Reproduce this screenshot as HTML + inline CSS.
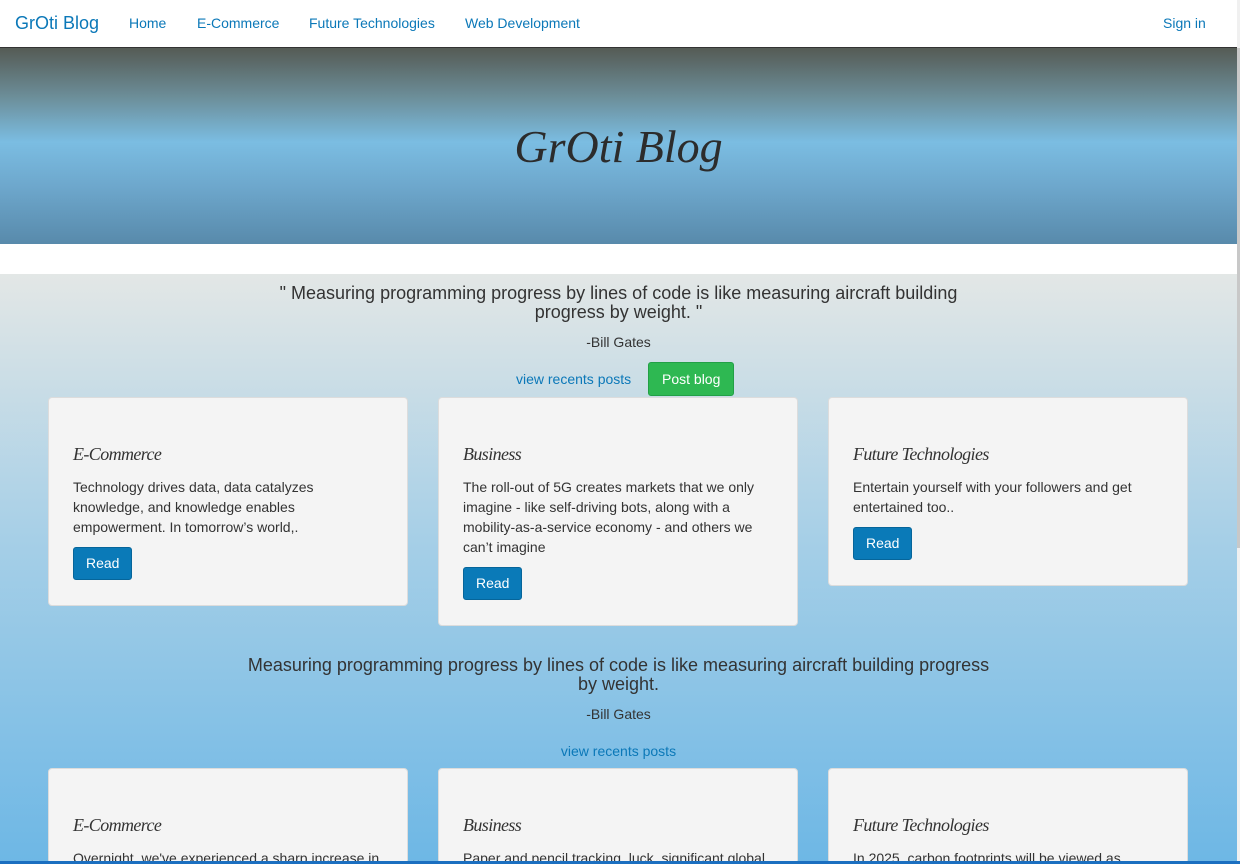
<!DOCTYPE html>
<html><head><meta charset="utf-8"><style>
*{box-sizing:border-box}
html,body{overflow:hidden}
body{margin:0;width:1240px;height:864px;font-family:"Liberation Sans",sans-serif;background:#fff;position:relative}
.nav{position:absolute;left:0;top:0;width:1237px;height:48px;background:#fff;border-bottom:1px solid #333}
.nav a{position:absolute;top:15px;color:#0b78b8;font-size:14px;text-decoration:none}
.brand{font-size:18px!important;top:13px!important}
.hero{position:absolute;top:48px;left:0;width:1237px;height:196px;background:linear-gradient(#555b55 0%,#6c8e99 25%,#7bbde2 48%,#6ea8cd 70%,#588aab 100%)}
.hero h1{margin:0;position:absolute;top:72px;width:100%;text-align:center;font-family:"URW Chancery L","Z003","Liberation Serif",cursive;font-style:italic;font-weight:normal;font-size:46px;color:#2c2c2c}
.main{position:absolute;top:274px;left:0;width:1237px;height:590px;overflow:hidden;background:linear-gradient(#e3e7e6 0%,#a6cfe7 45%,#6db7e5 100%)}
.q{position:absolute;width:100%;text-align:center;color:#333}
.quote{font-size:18px;line-height:19px}
.card{position:absolute;width:360px;background:#f4f4f4;border:1px solid #dcdcdc;border-radius:4px;padding:42px 24px 24px;overflow:hidden}
.card h3{margin:3px 0 12px;font-family:"Liberation Serif",cursive;font-style:italic;font-weight:normal;font-size:18px;line-height:22px;color:#333;letter-spacing:-0.6px}
.card p{margin:0 0 10px;font-size:14px;line-height:20px;color:#333;width:315px}
.btn{display:inline-block;background:#0a7ab8;color:#fff;border:1px solid #06659a;border-radius:3px;padding:7px 12px;font-size:14px;line-height:17px}
.link{color:#0b78b8;font-size:14px}
.sb{position:absolute;right:0;top:0;width:3px;height:864px;background:#f0f0f0}
.sb div{position:absolute;top:48px;width:3px;height:500px;background:#c8c8c8}
.bar{position:absolute;left:0;bottom:0;width:1240px;height:3px;background:#1b6fc0}
</style></head><body>
<div class="nav">
<a class="brand" style="left:15px">GrOti Blog</a>
<a style="left:129px">Home</a>
<a style="left:197px">E-Commerce</a>
<a style="left:309px">Future Technologies</a>
<a style="left:465px">Web Development</a>
<a style="left:1163px">Sign in</a>
</div>
<div class="hero"><h1>GrOti Blog</h1></div>
<div class="main">
<div class="q quote" style="top:10px;left:0"><div style="width:700px;margin:0 auto">" Measuring programming progress by lines of code is like measuring aircraft building progress by weight. "</div></div>
<div class="q" style="top:60px;font-size:14px">-Bill Gates</div>
<div style="position:absolute;top:97px;left:516px"><span class="link">view recents posts</span></div>
<div style="position:absolute;top:88px;left:648px;background:#2eb852;border:1px solid #22a046;border-radius:3px;color:#fff;font-size:14px;padding:8px 13px">Post blog</div>
<div class="card" style="left:48px;top:123px;height:209px"><h3>E-Commerce</h3><p>Technology drives data, data catalyzes knowledge, and knowledge enables empowerment. In tomorrow’s world,.</p><span class="btn">Read</span></div>
<div class="card" style="left:438px;top:123px;height:229px"><h3>Business</h3><p>The roll-out of 5G creates markets that we only imagine - like self-driving bots, along with a mobility-as-a-service economy - and others we can’t imagine</p><span class="btn">Read</span></div>
<div class="card" style="left:828px;top:123px;height:189px"><h3>Future Technologies</h3><p>Entertain yourself with your followers and get entertained too..</p><span class="btn">Read</span></div>
<div class="q quote" style="top:382px"><div style="width:760px;margin:0 auto">Measuring programming progress by lines of code is like measuring aircraft building progress by weight.</div></div>
<div class="q" style="top:432px;font-size:14px">-Bill Gates</div>
<div class="q" style="top:469px"><span class="link">view recents posts</span></div>
<div class="card" style="left:48px;top:494px;height:96px"><h3>E-Commerce</h3><p>Overnight, we've experienced a sharp increase in</p></div>
<div class="card" style="left:438px;top:494px;height:96px"><h3>Business</h3><p>Paper and pencil tracking, luck, significant global</p></div>
<div class="card" style="left:828px;top:494px;height:96px"><h3>Future Technologies</h3><p>In 2025, carbon footprints will be viewed as</p></div>
</div>
<div class="sb"><div></div></div>
<div class="bar"></div>
</body></html>
